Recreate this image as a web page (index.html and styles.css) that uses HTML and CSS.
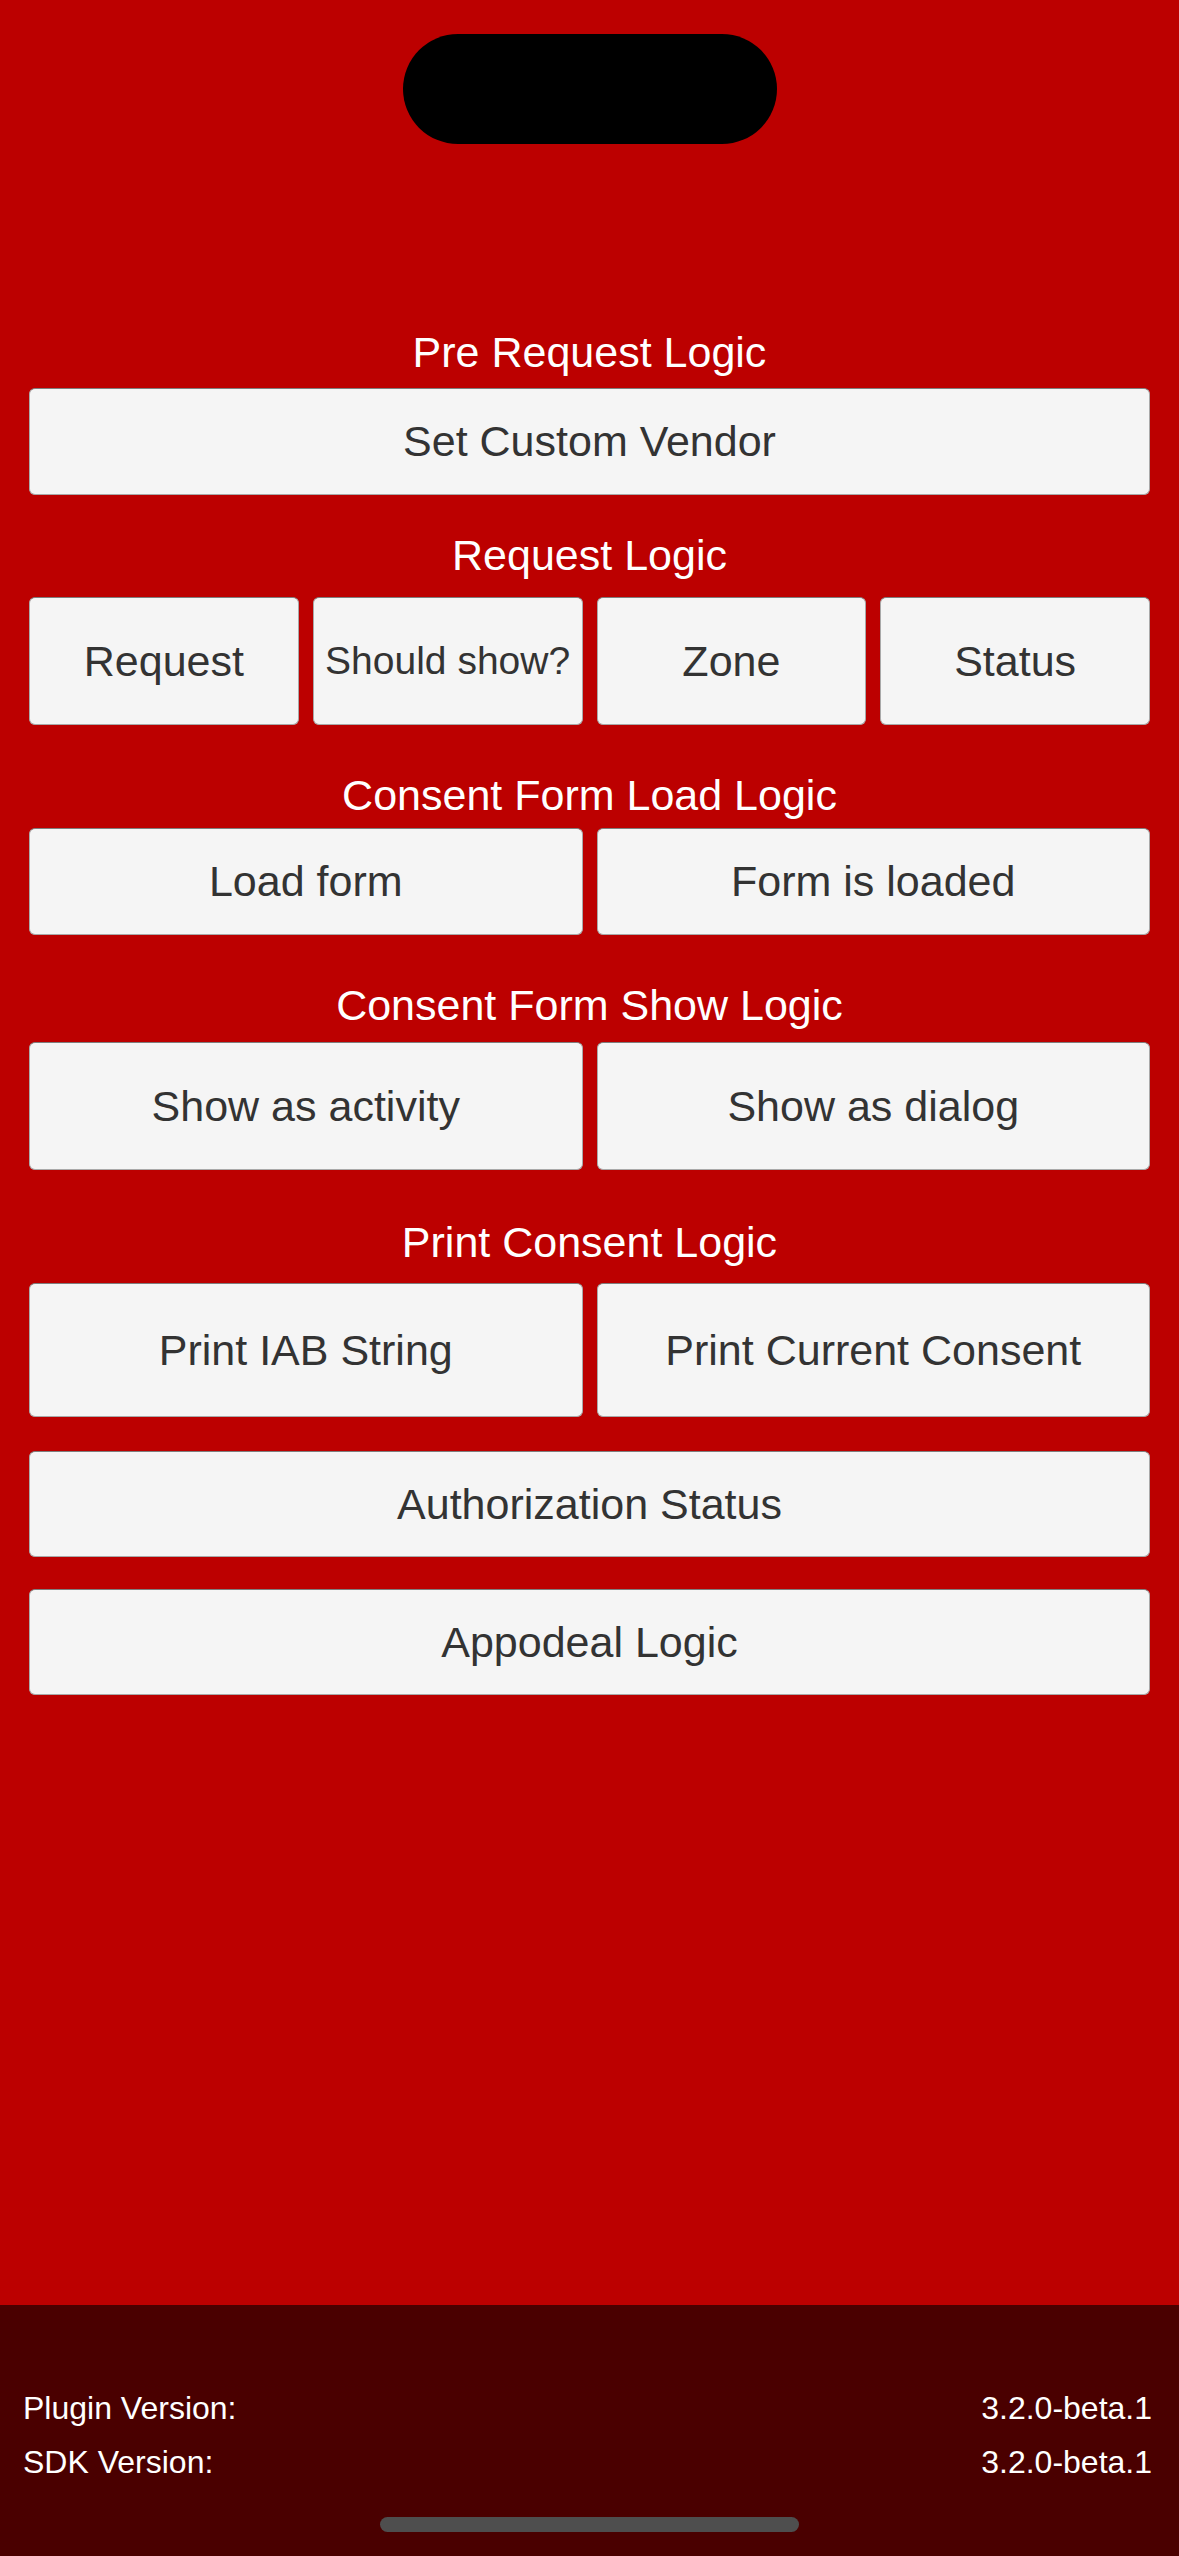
FILE: index.html
```html
<!DOCTYPE html>
<html lang="en">
<head>
<meta charset="utf-8">
<title>Consent Manager Demo</title>
<link rel="stylesheet" href="styles.css">
</head>
<body>
<div class="screen">
  <main class="content">
    <div class="island"></div>

    <h2 class="heading h-pre">Pre Request Logic</h2>
    <div class="row row-short gap-11">
      <div class="btn">Set Custom Vendor</div>
    </div>

    <h2 class="heading gap-35">Request Logic</h2>
    <div class="row row-tall gap-17">
      <div class="btn">Request</div>
      <div class="btn btn-small">Should show?</div>
      <div class="btn">Zone</div>
      <div class="btn">Status</div>
    </div>

    <h2 class="heading gap-45">Consent Form Load Logic</h2>
    <div class="row row-short gap-8">
      <div class="btn">Load form</div>
      <div class="btn">Form is loaded</div>
    </div>

    <h2 class="heading gap-45">Consent Form Show Logic</h2>
    <div class="row row-tall gap-12">
      <div class="btn">Show as activity</div>
      <div class="btn">Show as dialog</div>
    </div>

    <h2 class="heading gap-47">Print Consent Logic</h2>
    <div class="row row-print gap-16">
      <div class="btn">Print IAB String</div>
      <div class="btn">Print Current Consent</div>
    </div>

    <div class="row row-wide gap-34">
      <div class="btn">Authorization Status</div>
    </div>

    <div class="row row-wide gap-32">
      <div class="btn">Appodeal Logic</div>
    </div>
  </main>

  <footer class="footer">
    <div class="info-line"><span>Plugin Version:</span><span>3.2.0-beta.1</span></div>
    <div class="info-line"><span>SDK Version:</span><span>3.2.0-beta.1</span></div>
    <div class="home-indicator"></div>
  </footer>
</div>
</body>
</html>
```

FILE: styles.css
```css
html, body {
  margin: 0;
  padding: 0;
}

body {
  width: 1179px;
  height: 2556px;
  overflow: hidden;
  background: #bc0000;
  font-family: "Liberation Sans", Arial, sans-serif;
}

.screen {
  height: 2556px;
  display: flex;
  flex-direction: column;
}

.content {
  flex: 1;
  display: flex;
  flex-direction: column;
  padding: 0 29px;
}

.island {
  align-self: center;
  width: 374px;
  height: 110px;
  margin-top: 34px;
  border-radius: 55px;
  background: #000;
}

.heading {
  margin: 0;
  height: 50px;
  line-height: 50px;
  font-size: 43px;
  font-weight: normal;
  color: #ffffff;
  text-align: center;
  white-space: nowrap;
}

.h-pre { margin-top: 183px; }

.gap-8  { margin-top: 8px; }
.gap-11 { margin-top: 11px; }
.gap-12 { margin-top: 12px; }
.gap-16 { margin-top: 16px; }
.gap-17 { margin-top: 17px; }
.gap-32 { margin-top: 32px; }
.gap-34 { margin-top: 34px; }
.gap-35 { margin-top: 35px; }
.gap-45 { margin-top: 45px; }
.gap-47 { margin-top: 47px; }

.row {
  display: flex;
  gap: 14px;
}

.row-short { height: 107px; }
.row-tall  { height: 128px; }
.row-print { height: 134px; }
.row-wide  { height: 106px; }

.btn {
  flex: 1;
  min-width: 0;
  display: flex;
  align-items: center;
  justify-content: center;
  box-sizing: border-box;
  background: #f5f5f5;
  border: 1px solid #a9a9a9;
  border-top-color: #7e7e7e;
  border-radius: 6px;
  color: #333333;
  font-size: 43px;
  white-space: nowrap;
}

.btn-small { font-size: 39px; }

.footer {
  height: 251px;
  box-sizing: border-box;
  background: #4a0000;
  padding: 76px 27px 0 23px;
  display: flex;
  flex-direction: column;
}

.info-line {
  display: flex;
  justify-content: space-between;
  height: 54px;
  line-height: 54px;
  font-size: 32px;
  color: #ffffff;
}

.home-indicator {
  align-self: center;
  width: 419px;
  height: 15px;
  margin-top: 28px;
  margin-left: 4px;
  border-radius: 8px;
  background: #4e4e4e;
}
```
